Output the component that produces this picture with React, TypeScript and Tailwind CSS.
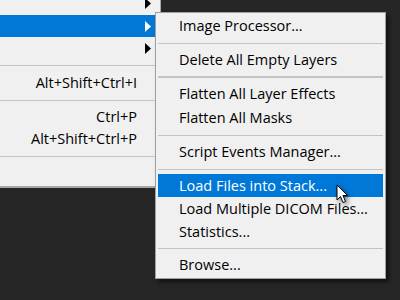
type SubItem = { label: string; h: number; active?: boolean } | { sep: true; h: number; thick?: boolean }

const subItems: SubItem[] = [
  { label: 'Image Processor...', h: 24 },
  { sep: true, h: 10 },
  { label: 'Delete All Empty Layers', h: 24 },
  { sep: true, h: 10, thick: true },
  { label: 'Flatten All Layer Effects', h: 24 },
  { label: 'Flatten All Masks', h: 24 },
  { sep: true, h: 10 },
  { label: 'Script Events Manager...', h: 24 },
  { sep: true, h: 10 },
  { label: 'Load Files into Stack...', h: 23, active: true },
  { label: 'Load Multiple DICOM Files...', h: 24 },
  { label: 'Statistics...', h: 22 },
  { sep: true, h: 10 },
  { label: 'Browse...', h: 24 },
]

function Arrow({ white }: { white?: boolean }) {
  return (
    <svg width="6" height="11" viewBox="0 0 6 11" className="shrink-0">
      <polygon points="0,0 6,5.5 0,11" fill={white ? '#ffffff' : '#000000'} />
    </svg>
  )
}

function Sep({ h, line = 'h-px' }: { h: number; line?: string }) {
  return (
    <div className="flex items-center" style={{ height: h }}>
      <div className={`w-full bg-[#c4c4c4] ${line}`} />
    </div>
  )
}

export default function App() {
  return (
    <div className="relative h-[300px] w-[400px] overflow-hidden bg-[#262626] font-['Segoe_UI','Open_Sans',sans-serif] text-[14.5px] text-black">
      {/* parent menu */}
      <div className="-mt-[8px] w-[161px] border-b-2 border-r border-[#a8a8a8] bg-[#f0f0f0]">
        <div className="flex h-[23px] items-center justify-end pr-[9px]">
          <Arrow />
        </div>
        <div className="flex h-[22px] items-center justify-end bg-[#0078d7] pr-[9px]">
          <Arrow white />
        </div>
        <div className="flex h-[22px] items-center justify-end pr-[9px]">
          <Arrow />
        </div>
        <Sep h={12} />
        <div className="flex h-[24px] items-center justify-end pr-[23px]">Alt+Shift+Ctrl+I</div>
        <Sep h={11} />
        <div className="flex h-[22px] items-center justify-end pr-[23px]">Ctrl+P</div>
        <div className="flex h-[22px] items-center justify-end pr-[23px]">Alt+Shift+Ctrl+P</div>
        <Sep h={12} />
        <div className="h-[24px]" />
      </div>

      {/* submenu */}
      <div className="absolute left-[155px] top-[12px] w-[231px] border border-[#a0a0a0] bg-[#f0f0f0] px-[2px] pb-[1px] pt-[1px] shadow-[3px_3px_4px_rgba(0,0,0,0.55)]">
        {subItems.map((it, i) =>
          'sep' in it ? (
            <Sep key={i} h={it.h} line={it.thick ? 'h-[2px]' : 'h-px'} />
          ) : (
            <div
              key={i}
              className={`flex items-center pl-[21px] ${it.active ? 'bg-[#0078d7] text-white' : ''}`}
              style={{ height: it.h }}
            >
              {it.label}
            </div>
          )
        )}
      </div>

      {/* mouse pointer */}
      <svg
        width="14"
        height="21"
        viewBox="0 0 14 21"
        className="absolute left-[336px] top-[184px] drop-shadow-[2px_2px_2px_rgba(0,0,0,0.5)]"
      >
        <path d="M1 1 L1 16 L4.5 12.5 L7 18.5 L9.5 17.5 L7 11.5 L11.5 11.5 Z" fill="#ffffff" stroke="#000000" strokeWidth="1" strokeLinejoin="round" />
      </svg>
    </div>
  )
}
